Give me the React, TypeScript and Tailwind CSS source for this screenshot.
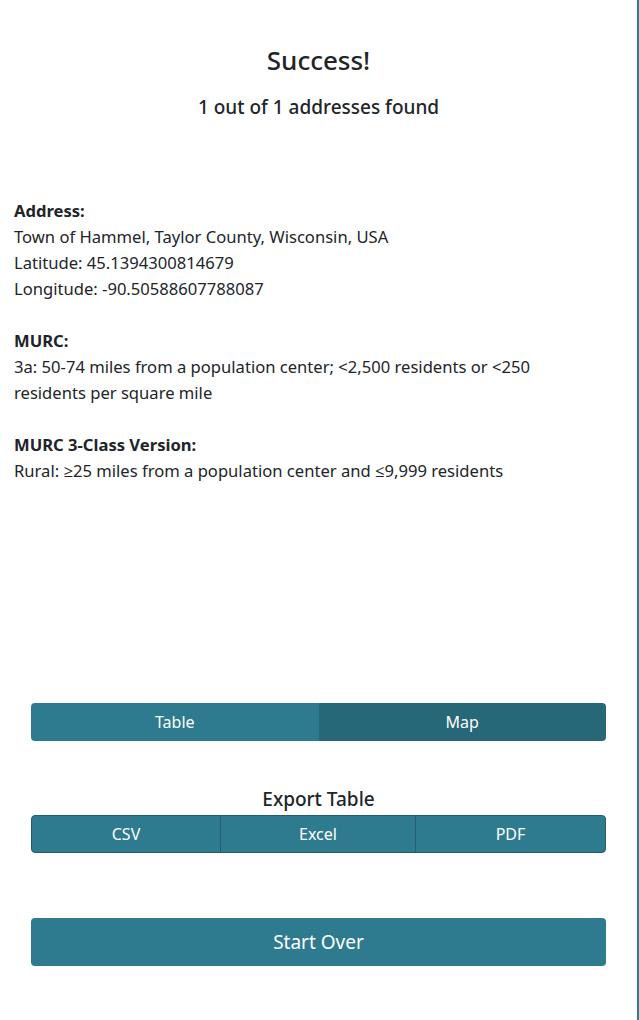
import React, { useState } from "react";

const App = () => {
  const [view, setView] = useState<"table" | "map">("map");

  return (
    <div
      className="w-[639px] h-[1020px] bg-white border-r-2 border-[#2e7b90] text-[#212529] flex flex-col"
      style={{ fontFamily: '"Noto Sans", "Open Sans", sans-serif' }}
    >
      <div className="pt-[42px] text-center">
        <h3 className="text-[26px] leading-[36px] font-medium">Success!</h3>
        <h5 className="mt-[16px] text-[19px] leading-[26px] font-medium">1 out of 1 addresses found</h5>
      </div>

      <div className="mt-[78px] pl-[14px] pr-[40px] text-[16.6px] leading-[26px]">
        <p className="font-bold">Address:</p>
        <p>Town of Hammel, Taylor County, Wisconsin, USA</p>
        <p>Latitude: 45.1394300814679</p>
        <p>Longitude: -90.50588607788087</p>
        <br />
        <p className="font-bold">MURC:</p>
        <p>3a: 50-74 miles from a population center; &lt;2,500 residents or &lt;250 residents per square mile</p>
        <br />
        <p className="font-bold">MURC 3-Class Version:</p>
        <p>Rural: ≥25 miles from a population center and ≤9,999 residents</p>
      </div>

      <div className="mt-[219px] mx-[31px] flex h-[38px] rounded overflow-hidden text-white text-[16px]">
        <button
          onClick={() => setView("table")}
          className={`flex-1 ${view === "table" ? "bg-[#276878]" : "bg-[#2e7b90]"}`}
        >
          Table
        </button>
        <button
          onClick={() => setView("map")}
          className={`flex-1 ${view === "map" ? "bg-[#276878]" : "bg-[#2e7b90]"}`}
        >
          Map
        </button>
      </div>

      <div className="mt-[45px] text-center text-[19px] leading-[26px] font-medium">Export Table</div>
      <div className="mt-[3px] mx-[31px] flex h-[38px] rounded border border-[#255f6e] overflow-hidden bg-[#2e7b90] text-white text-[16px]">
        <button className="w-[189px] border-r border-[#255f6e]">CSV</button>
        <button className="w-[195px] border-r border-[#255f6e]">Excel</button>
        <button className="flex-1">PDF</button>
      </div>

      <button className="mt-[65px] mx-[31px] h-[48px] rounded bg-[#2e7b90] text-white text-[19px]">
        Start Over
      </button>
    </div>
  );
};

export default App;
